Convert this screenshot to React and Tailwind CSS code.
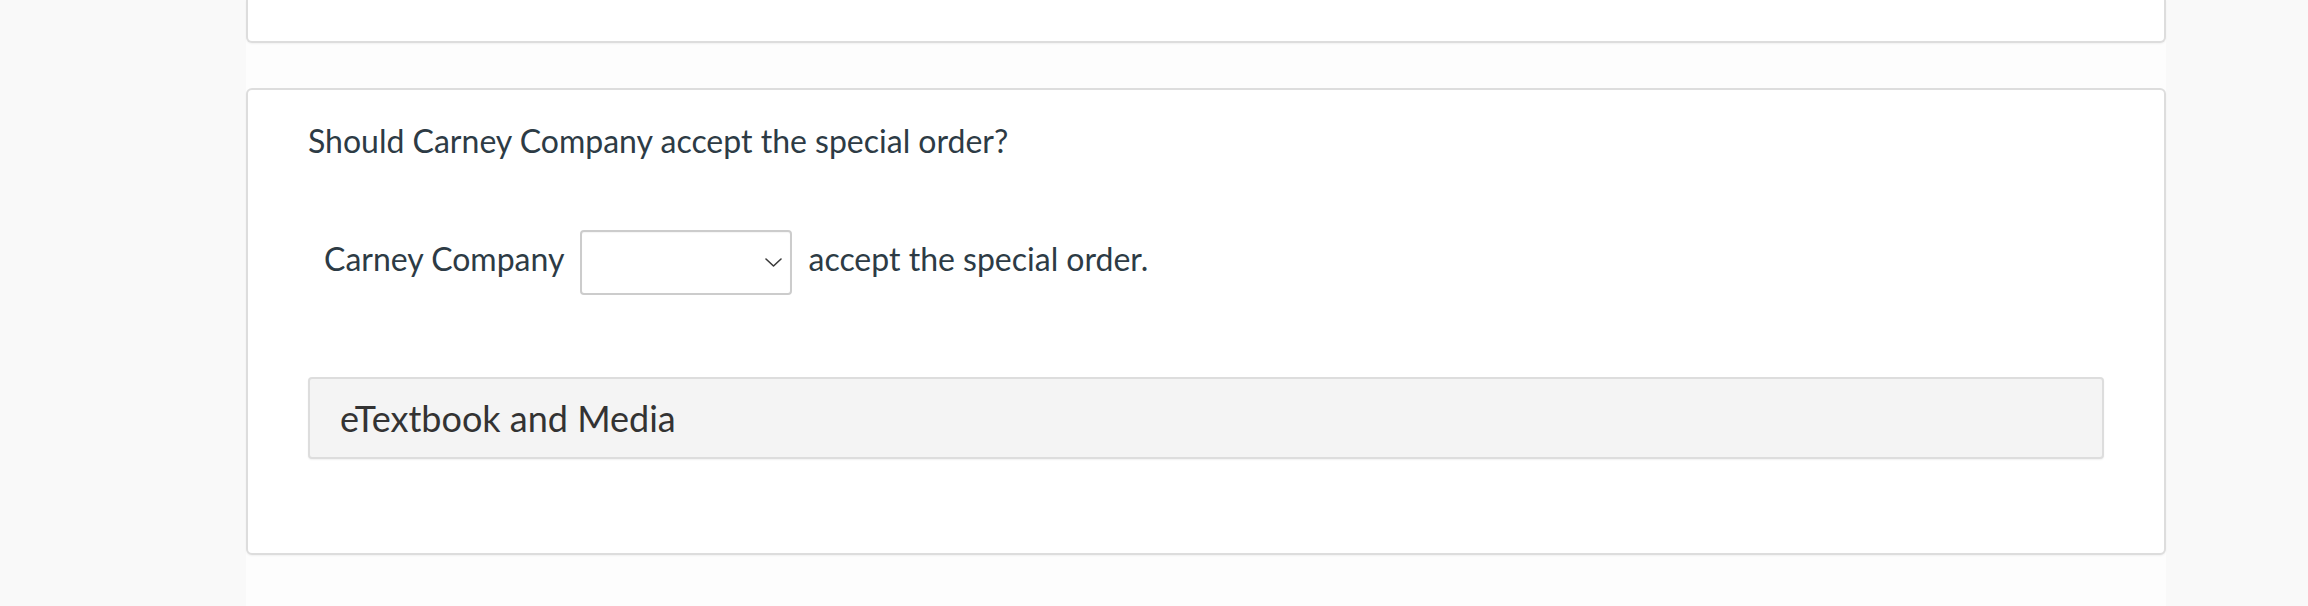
import React from 'react';

function ChevronDown() {
  return (
    <svg width="17" height="9" viewBox="0 0 17 9" fill="none" className="shrink-0">
      <path d="M1 1l7.5 7L16 1" stroke="#3a3a3a" strokeWidth="1.6" strokeLinecap="round" strokeLinejoin="round" />
    </svg>
  );
}

export default function App() {
  return (
    <div className="flex h-[606px] overflow-hidden bg-[#f9f9f9] font-['Lato','Liberation_Sans',sans-serif]">
      <div className="w-[246px] shrink-0" />
      <div className="w-[1920px] shrink-0 bg-[#fdfdfd]">
        <div className="h-[43px] rounded-b-[6px] border-2 border-t-0 border-[#dddddd] bg-white shadow-[0_1px_2px_rgba(0,0,0,0.05)]" />

        <div className="mt-[45px] rounded-[6px] border-2 border-[#dddddd] bg-white px-[60px] pt-[28px] pb-[94px] shadow-[0_1px_2px_rgba(0,0,0,0.05)]">
          <p className="text-[32px] leading-[45px] text-[#2d3b45]">Should Carney Company accept the special order?</p>

          <div className="mt-[67px] flex h-[65px] items-center pl-[16px] text-[32px] text-[#2d3b45]">
            <span className="pb-[8px]">Carney Company</span>
            <div className="mx-[16px] flex h-[65px] w-[212px] items-center justify-end rounded-[4px] border-2 border-[#cccccc] bg-white pr-[8px] shadow-[inset_0_1px_1px_rgba(0,0,0,0.04)]">
              <ChevronDown />
            </div>
            <span className="pb-[8px]">accept the special order.</span>
          </div>

          <div className="mt-[82px] flex h-[82px] items-center rounded-[4px] border-2 border-[#dddddd] bg-[#f4f4f4] px-[30px] shadow-[0_1px_2px_rgba(0,0,0,0.06)]">
            <span className="text-[36px] text-[#333333]">eTextbook and Media</span>
          </div>
        </div>
      </div>
      <div className="flex-1" />
    </div>
  );
}
